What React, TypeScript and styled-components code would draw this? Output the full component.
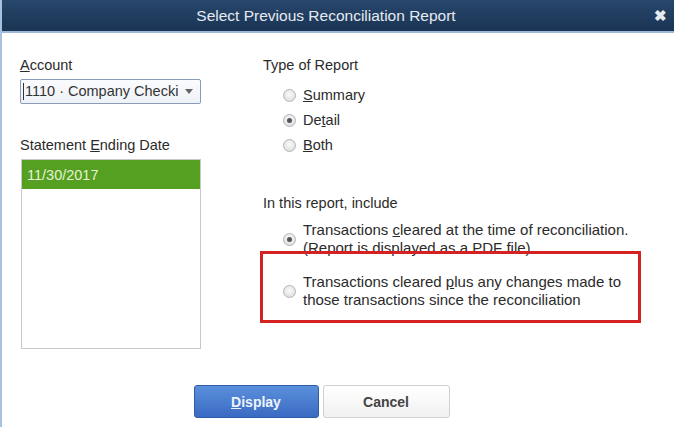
import React from 'react';
import styled, { createGlobalStyle } from 'styled-components';

const GlobalStyle = createGlobalStyle`
    html, body {
        margin: 0;
        padding: 0;
        background: #fff;
    }
    body {
        font-family: "Liberation Sans", Arial, sans-serif;
    }
`;

const Window = styled.div`
    width: 674px;
    height: 427px;
    box-sizing: border-box;
    border-left: 2px solid #a9c1df;
    background: #fff;
    display: flex;
    flex-direction: column;
    overflow: hidden;
`;

const TitleBar = styled.div`
    height: 33px;
    box-sizing: border-box;
    display: flex;
    align-items: center;
    background: linear-gradient(#28476c, #1a3454);
    border-bottom: 2px solid #9db8da;
`;

const Title = styled.div`
    flex: 1;
    padding-left: 4px;
    text-align: center;
    color: #e6ebf2;
    font-size: 15.5px;
`;

const Close = styled.div`
    width: 28px;
    text-align: center;
    color: #e6ebf2;
    font-size: 15px;
    font-weight: bold;
`;

const Body = styled.div`
    display: flex;
    gap: 62px;
    padding: 24px 0 0 18px;
    height: 337px;
    box-sizing: border-box;
`;

const Column = styled.div<{ $width?: number }>`
    display: flex;
    flex-direction: column;
    width: ${(p) => (p.$width ? `${p.$width}px` : 'auto')};
    flex: ${(p) => (p.$width ? 'none' : '1')};
`;

const Label = styled.div<{ $gap?: number }>`
    font-size: 14.5px;
    line-height: 16px;
    color: #2b2b2b;
    margin-top: ${(p) => p.$gap ?? 0}px;
`;

const Combo = styled.div`
    margin-top: 6px;
    height: 25px;
    box-sizing: border-box;
    display: flex;
    align-items: center;
    border: 1px solid #8a9bb8;
    border-radius: 2px;
    background: linear-gradient(#fbfcfe, #eef1f6);
    padding: 0 7px 0 2px;
    font-size: 14.5px;
    color: #333;
`;

const ComboText = styled.span`
    flex: 1;
    white-space: nowrap;
    overflow: hidden;
    border-left: 1px solid #333;
    padding-left: 1px;
    line-height: 17px;
`;

const Arrow = styled.span`
    width: 0;
    height: 0;
    border-left: 4px solid transparent;
    border-right: 4px solid transparent;
    border-top: 5px solid #666;
    margin-left: 6px;
`;

const ListBox = styled.div`
    margin: 6px 0 0 1px;
    width: 180px;
    height: 190px;
    box-sizing: border-box;
    border: 1px solid #c8c8c8;
    background: #fff;
`;

const ListRow = styled.div<{ $selected?: boolean }>`
    height: 29px;
    display: flex;
    align-items: center;
    padding-left: 5px;
    font-size: 14.5px;
    background: ${(p) => (p.$selected ? '#55a020' : 'transparent')};
    color: ${(p) => (p.$selected ? '#e4f2d4' : '#333')};
`;

const RadioGroup = styled.div`
    display: flex;
    flex-direction: column;
    margin-top: 14px;
    padding-left: 20px;
    gap: 9px;
`;

const Option = styled.label`
    display: flex;
    align-items: center;
    gap: 7px;
    font-size: 14.5px;
    line-height: 16px;
    color: #2b2b2b;
`;

const Radio = styled.span<{ $checked?: boolean }>`
    width: 13px;
    height: 13px;
    flex: none;
    box-sizing: border-box;
    border-radius: 50%;
    border: 1px solid #b4b4b4;
    background: radial-gradient(circle at 50% 40%, #fafafa, #d8d8d8);
    display: flex;
    align-items: center;
    justify-content: center;

    &::after {
        content: '';
        width: 5px;
        height: 5px;
        border-radius: 50%;
        background: #555;
        display: ${(p) => (p.$checked ? 'block' : 'none')};
    }
`;

const IncludeOption = styled.label`
    display: flex;
    align-items: center;
    gap: 7px;
    padding-left: 20px;
    font-size: 15px;
    line-height: 18px;
    color: #2b2b2b;
    margin-top: 10px;
    height: 36px;
    white-space: nowrap;
`;

const Highlight = styled.div`
    position: relative;
    margin: -6px 0 0 -3px;
    width: 381px;
    height: 72px;
    box-sizing: border-box;
    border: 3px solid #d42121;
    padding-top: 8px;
    display: flex;
    align-items: center;

    ${IncludeOption} {
        margin-top: 0;
        padding-left: 20px;
    }
`;

const Footer = styled.div`
    display: flex;
    justify-content: center;
    gap: 4px;
    padding-right: 33px;
    padding-top: 15px;
`;

const Button = styled.button<{ $primary?: boolean }>`
    height: 33px;
    width: ${(p) => (p.$primary ? 125 : 127)}px;
    border-radius: 3px;
    font-family: "Liberation Sans", Arial, sans-serif;
    font-size: 14px;
    font-weight: bold;
    border: 1px solid ${(p) => (p.$primary ? '#2f5ca6' : '#d0d0d0')};
    background: ${(p) =>
        p.$primary
            ? 'linear-gradient(#5b90dc, #3a6ac2)'
            : 'linear-gradient(#ffffff, #f1f1f1)'};
    color: ${(p) => (p.$primary ? '#eef3fb' : '#444')};
`;

const App = () => {
    return (
        <>
            <GlobalStyle />
            <Window>
                <TitleBar>
                    <Title>Select Previous Reconciliation Report</Title>
                    <Close>✖</Close>
                </TitleBar>
                <Body>
                    <Column $width={181}>
                        <Label>
                            <u>A</u>ccount
                        </Label>
                        <Combo>
                            <ComboText>1110 · Company Checking</ComboText>
                            <Arrow />
                        </Combo>
                        <Label $gap={33}>
                            Statement <u>E</u>nding Date
                        </Label>
                        <ListBox>
                            <ListRow $selected>11/30/2017</ListRow>
                        </ListBox>
                    </Column>
                    <Column>
                        <Label>Type of Report</Label>
                        <RadioGroup>
                            <Option>
                                <Radio />
                                <span>
                                    <u>S</u>ummary
                                </span>
                            </Option>
                            <Option>
                                <Radio $checked />
                                <span>
                                    De<u>t</u>ail
                                </span>
                            </Option>
                            <Option>
                                <Radio />
                                <span>
                                    <u>B</u>oth
                                </span>
                            </Option>
                        </RadioGroup>
                        <Label $gap={42}>In this report, include</Label>
                        <IncludeOption>
                            <Radio $checked />
                            <span>
                                Transactions <u>c</u>leared at the time of
                                reconciliation.
                                <br />
                                (Report is displayed as a PDF file)
                            </span>
                        </IncludeOption>
                        <Highlight>
                            <IncludeOption>
                                <Radio />
                                <span>
                                    Transactions cleared <u>p</u>lus any changes
                                    made to
                                    <br />
                                    those transactions since the reconciliation
                                </span>
                            </IncludeOption>
                        </Highlight>
                    </Column>
                </Body>
                <Footer>
                    <Button $primary>
                        <u>D</u>isplay
                    </Button>
                    <Button>Cancel</Button>
                </Footer>
            </Window>
        </>
    );
};

export default App;
